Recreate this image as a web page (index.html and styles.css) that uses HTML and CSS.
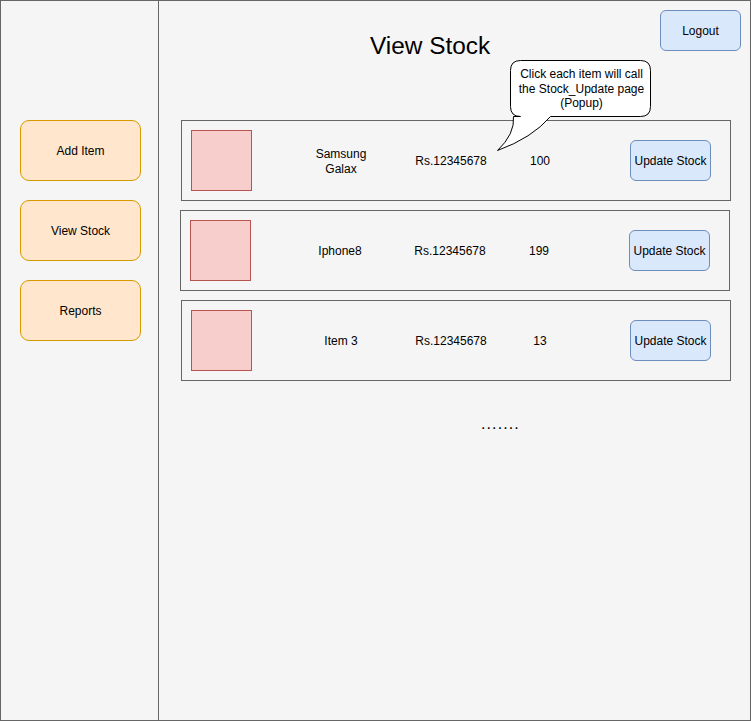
FILE: index.html
```html
<!DOCTYPE html>
<html lang="en">
<head>
<meta charset="utf-8">
<title>View Stock</title>
<link rel="stylesheet" href="styles.css">
</head>
<body>
<div class="frame">
  <aside class="sidebar">
    <div class="nav-btn">Add Item</div>
    <div class="nav-btn">View Stock</div>
    <div class="nav-btn">Reports</div>
  </aside>
  <main class="main">
    <header class="header">
      <h1 class="title">View Stock</h1>
      <div class="btn-blue logout">Logout</div>
    </header>
    <section class="list">
      <div class="row">
        <div class="thumb"></div>
        <div class="cell name">Samsung<br>Galax</div>
        <div class="cell price">Rs.12345678</div>
        <div class="cell qty">100</div>
        <div class="btn-blue update">Update Stock</div>
      </div>
      <div class="row row-shift">
        <div class="thumb"></div>
        <div class="cell name">Iphone8</div>
        <div class="cell price">Rs.12345678</div>
        <div class="cell qty">199</div>
        <div class="btn-blue update">Update Stock</div>
      </div>
      <div class="row">
        <div class="thumb"></div>
        <div class="cell name">Item 3</div>
        <div class="cell price">Rs.12345678</div>
        <div class="cell qty">13</div>
        <div class="btn-blue update">Update Stock</div>
      </div>
    </section>
    <div class="more">.......</div>
  </main>
  <div class="callout">
    <svg class="callout-shape" width="170" height="100" viewBox="490 55 170 100" xmlns="http://www.w3.org/2000/svg">
      <path d="M520.5 60.5 H640.5 Q650.5 60.5 650.5 70.5 V106.5 Q650.5 116.5 640.5 116.5 H550.5 Q532 138 497.5 150.5 Q515 134 513.5 116.5 H520.5 Q510.5 116.5 510.5 106.5 V70.5 Q510.5 60.5 520.5 60.5 Z" fill="#ffffff" stroke="#000000" stroke-width="1"/>
    </svg>
    <div class="callout-text">Click each item will call<br>the Stock_Update page<br>(Popup)</div>
  </div>
</div>
</body>
</html>
```
FILE: styles.css
```css
* {
  box-sizing: border-box;
}

html, body {
  margin: 0;
  padding: 0;
  background: #ffffff;
}

body {
  font-family: "Liberation Sans", Arial, Helvetica, sans-serif;
  font-size: 12px;
  color: #000000;
}

.frame {
  position: relative;
  width: 751px;
  height: 721px;
  border: 1px solid #666666;
  background: #f5f5f5;
  display: flex;
}

.sidebar {
  width: 158px;
  flex: 0 0 158px;
  border-right: 1px solid #666666;
  padding: 119px 0 0 19px;
  display: flex;
  flex-direction: column;
  gap: 19px;
}

.nav-btn {
  width: 121px;
  height: 61px;
  border: 1px solid #d79b00;
  background: #ffe6cc;
  border-radius: 9px;
  display: flex;
  align-items: center;
  justify-content: center;
  font-size: 12px;
}

.main {
  flex: 1;
  display: flex;
  flex-direction: column;
  padding: 9px 0 0 22px;
}

.header {
  height: 110px;
  display: flex;
  align-items: flex-start;
}

.title {
  margin: 22px 0 0 189px;
  font-size: 24.4px;
  font-weight: normal;
  line-height: 28px;
}

.btn-blue {
  border: 1px solid #6c8ebf;
  background: #dae8fc;
  border-radius: 6px;
  display: flex;
  align-items: center;
  justify-content: center;
  font-size: 12px;
}

.logout {
  margin-left: auto;
  margin-right: 9px;
  width: 81px;
  height: 41px;
}

.list {
  display: flex;
  flex-direction: column;
  gap: 9px;
}

.row {
  width: 550px;
  height: 81px;
  border: 1px solid #666666;
  display: flex;
  align-items: center;
}

.row-shift {
  margin-left: -1px;
}

.thumb {
  margin-left: 9px;
  width: 61px;
  height: 61px;
  background: #f8cecc;
  border: 1px solid #b85450;
}

.cell {
  text-align: center;
  line-height: 15px;
  padding-top: 2px;
}

.name {
  margin-left: 29px;
  width: 120px;
}

.price {
  width: 100px;
}

.qty {
  width: 78px;
}

.update {
  margin-left: 51px;
  width: 81px;
  height: 41px;
}

.more {
  margin: 34px 0 0 300px;
  font-size: 16px;
  letter-spacing: 1.1px;
  line-height: 18px;
}

.callout {
  position: absolute;
  left: 489px;
  top: 54px;
  width: 170px;
  height: 100px;
}

.callout-shape {
  position: absolute;
  left: 0;
  top: 0;
  display: block;
}

.callout-text {
  position: absolute;
  left: 21px;
  top: 12px;
  width: 141px;
  text-align: center;
  font-size: 12px;
  line-height: 14.5px;
}
```
